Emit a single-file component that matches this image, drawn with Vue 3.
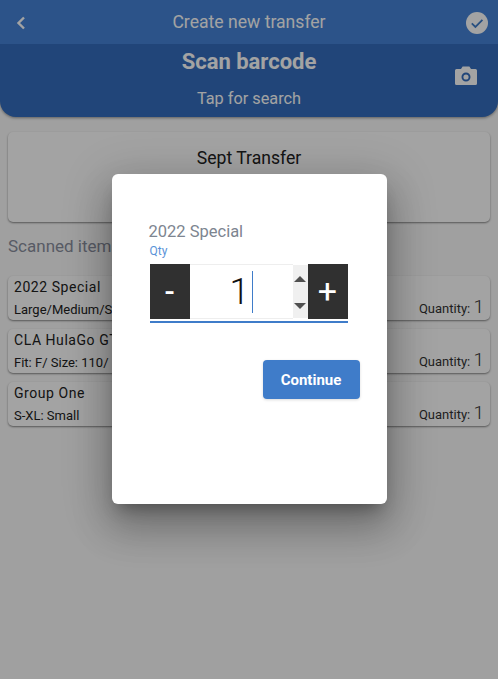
<script setup>
const items = [
  { name: '2022 Special', desc: 'Large/Medium/Small', qty: 1 },
  { name: 'CLA HulaGo GT', desc: 'Fit: F/ Size: 110/', qty: 1 },
  { name: 'Group One', desc: 'S-XL: Small', qty: 1 },
]
</script>

<template>
  <div class="page">
    <header class="top">
      <div class="nav">
        <svg class="back" width="12" height="16" viewBox="0 0 12 16">
          <path d="M9 2.5 3.5 8 9 13.500" fill="none" stroke="currentColor" stroke-width="2.4" />
        </svg>
        <span class="nav-title">Create new transfer</span>
        <svg class="done" width="22" height="22" viewBox="0 0 22 22">
          <circle cx="11" cy="11" r="11" fill="#ffffff" />
          <path d="M5.8 11.4 9.4 15 16.4 7.8" fill="none" stroke="#3f7cc9" stroke-width="1.8" />
        </svg>
      </div>
      <div class="scan">
        <div class="scan-title">Scan barcode</div>
        <div class="scan-sub">Tap for search</div>
        <svg class="camera" width="24" height="22" viewBox="0 0 24 22">
          <path fill="#ffffff" fill-rule="evenodd" d="M2.5 4H7l1.6-2.6h6.8L17 4h4.5A1.5 1.5 0 0 1 23 5.500v13a1.500 1.500 0 0 1-1.500 1.500h-19A1.500 1.500 0 0 1 1 18.500v-13A1.500 1.500 0 0 1 2.500 4ZM12 7.500a4.500 4.500 0 1 0 0 9 4.500 4.500 0 0 0 0-9Zm0 1.900a2.600 2.600 0 1 1 0 5.200 2.600 2.600 0 0 1 0-5.200Z" />
        </svg>
      </div>
    </header>

    <section class="transfer-card">Sept Transfer</section>

    <h2 class="section-title">Scanned items</h2>

    <div class="item-list">
      <div v-for="item in items" :key="item.name" class="item">
        <div class="item-left">
          <div class="item-name">{{ item.name }}</div>
          <div class="item-desc">{{ item.desc }}</div>
        </div>
        <div class="item-qty">Quantity: <span class="qty-num">{{ item.qty }}</span></div>
      </div>
    </div>

    <div class="overlay">
      <div class="dialog">
        <div class="dialog-title">2022 Special</div>
        <div class="qty-label">Qty</div>
        <div class="stepper">
          <button class="step">-</button>
          <div class="qty-field">
            <span class="qty-value">1</span>
            <span class="caret"></span>
          </div>
          <div class="spin">
            <span class="up"></span>
            <span class="down"></span>
          </div>
          <button class="step plus">+</button>
        </div>
        <div class="underline"></div>
        <div class="actions">
          <button class="continue">Continue</button>
        </div>
      </div>
    </div>
  </div>
</template>

<style>
html, body {
  margin: 0;
  background: #fafafa;
}
</style>

<style scoped>
.page {
  position: relative;
  height: 679px;
  overflow: hidden;
  background: #fafafa;
  font-family: Roboto, "Liberation Sans", sans-serif;
  color: #222;
}
.top {
  color: #fff;
  background: #346dbd;
  border-radius: 0 0 16px 16px;
  box-shadow: 0 1px 3px rgba(0, 0, 0, .4);
}
.nav {
  position: relative;
  display: flex;
  align-items: center;
  justify-content: center;
  height: 44px;
  background: #4583d6;
}
.nav-title {
  font-size: 17.6px;
  color: #fff;
}
.back {
  position: absolute;
  left: 15px;
  top: 15px;
}
.done {
  position: absolute;
  left: 466px;
  top: 12px;
}
.scan {
  position: relative;
  height: 73px;
  text-align: center;
}
.scan-title {
  padding-top: 5px;
  font-size: 22px;
  font-weight: 700;
  line-height: 26px;
}
.scan-sub {
  margin-top: 13px;
  font-size: 16.300px;
  line-height: 22px;
}
.camera {
  position: absolute;
  left: 454px;
  top: 21px;
}
.transfer-card {
  height: 90px;
  margin: 15px 8px 0;
  padding-top: 15px;
  box-sizing: border-box;
  background: #fff;
  border-radius: 5px;
  box-shadow: 0 1px 2px rgba(0, 0, 0, .45);
  font-size: 17.6px;
  line-height: 22px;
  text-align: center;
}
.section-title {
  margin: 13px 8px 0;
  font-size: 17px;
  font-weight: 400;
  line-height: 22px;
  color: #8a8f9e;
}
.item-list {
  display: flex;
  flex-direction: column;
  gap: 9px;
  margin: 19px 8px 0;
}
.item {
  display: flex;
  align-items: flex-end;
  justify-content: space-between;
  height: 44px;
  padding: 0 6px;
  box-sizing: border-box;
  background: #fff;
  border-radius: 5px;
  box-shadow: 0 1px 2px rgba(0, 0, 0, .45);
}
.item-left {
  align-self: flex-start;
}
.item-name {
  font-size: 14px;
  line-height: 20px;
  letter-spacing: .55px;
  padding-top: 1px;
}
.item-desc {
  margin-top: 5px;
  font-size: 13px;
  line-height: 16px;
  white-space: nowrap;
}
.item-qty {
  padding-bottom: 1px;
  font-size: 13px;
  line-height: 20px;
  color: #333;
}
.qty-num {
  font-size: 19px;
  font-weight: 300;
  line-height: 20px;
}
.overlay {
  position: absolute;
  inset: 0;
  display: flex;
  align-items: flex-start;
  justify-content: center;
  padding-top: 174px;
  background: rgba(0, 0, 0, .36);
}
.dialog {
  width: 275px;
  height: 330px;
  padding: 48px 27px 0 37px;
  box-sizing: border-box;
  background: #fff;
  border-radius: 6px;
  box-shadow: 0 11px 15px -7px rgba(0, 0, 0, .3), 0 24px 38px 3px rgba(0, 0, 0, .2), 0 9px 46px 8px rgba(0, 0, 0, .16);
}
.dialog-title {
  font-size: 16.500px;
  line-height: 20px;
  color: #7d8590;
}
.qty-label {
  margin: 2px 0 0 1px;
  font-size: 12px;
  line-height: 14px;
  color: #5b93d8;
}
.stepper {
  display: flex;
  width: 198px;
  height: 55px;
  margin: 6px 0 0 1px;
}
.step {
  width: 40px;
  padding: 0;
  border: 0;
  background: #303030;
  color: #fff;
  font-family: inherit;
  font-size: 30px;
  font-weight: 500;
  line-height: 55px;
}
.plus {
  font-size: 34px;
  font-weight: 400;
}
.qty-field {
  position: relative;
  display: flex;
  flex: 1;
  align-items: center;
  justify-content: flex-end;
  padding-right: 43px;
  border-top: 1px solid #eee;
  border-bottom: 1px solid #eee;
}
.qty-value {
  font-size: 36px;
  font-weight: 300;
  color: #111;
}
.caret {
  position: absolute;
  left: 62px;
  top: 6px;
  width: 1px;
  height: 42px;
  background: #3f7cc9;
}
.spin {
  display: flex;
  flex-direction: column;
  align-items: center;
  justify-content: space-between;
  width: 15px;
  height: 53px;
  margin-top: 1px;
  padding: 11px 0 9px;
  box-sizing: border-box;
  background: #f0f0f0;
}
.up {
  border: 6px solid transparent;
  border-top: 0;
  border-bottom-color: #505050;
}
.down {
  border: 6px solid transparent;
  border-bottom: 0;
  border-top-color: #505050;
}
.underline {
  width: 198px;
  height: 2px;
  margin: 2px 0 0 1px;
  background: #3f7cc9;
}
.actions {
  display: flex;
  justify-content: flex-end;
  margin-top: 37px;
}
.continue {
  width: 97px;
  height: 39px;
  padding: 0;
  border: 0;
  border-radius: 4px;
  background: #3f7cc9;
  color: #fff;
  font-family: inherit;
  font-size: 15px;
  font-weight: 700;
  box-shadow: 0 1px 3px rgba(0, 0, 0, .15);
}
</style>
